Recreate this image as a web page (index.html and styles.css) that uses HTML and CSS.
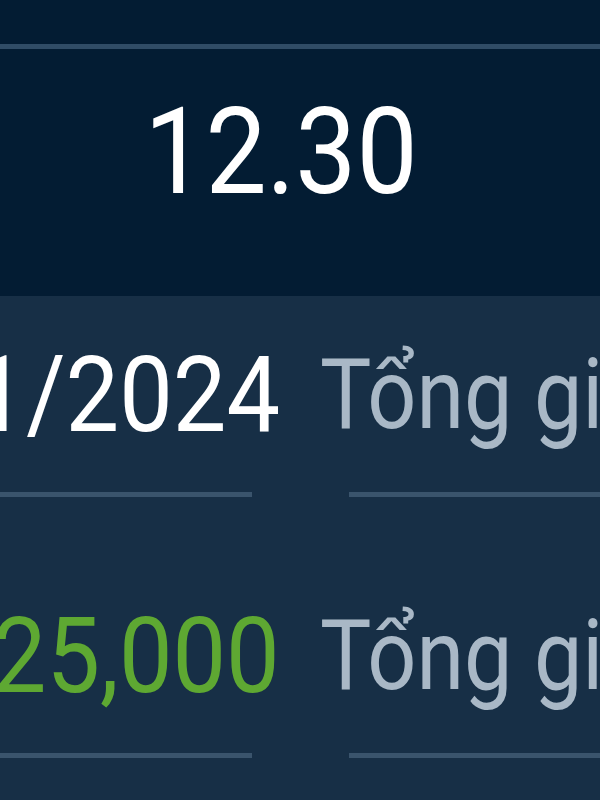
FILE: index.html
```html
<!DOCTYPE html>
<html lang="vi">
<head>
    <meta charset="UTF-8">
    <meta name="viewport" content="width=device-width, initial-scale=1.0">
    <title>Bảng công</title>
    <link rel="stylesheet" href="styles.css">
</head>
<body>
    <div class="screen">
        <!-- Phần đầu: giờ hiện tại -->
        <div class="header">
            <div class="rule"></div>
            <div class="clock"><span class="squeeze">12.30</span></div>
        </div>

        <!-- Bảng tổng hợp -->
        <div class="summary">
            <div class="row">
                <div class="cell value-cell">
                    <div class="value"><span class="squeeze">31/01/2024</span></div>
                    <div class="divider"></div>
                </div>
                <div class="cell label-cell">
                    <div class="label"><span class="squeeze">Tổng giờ làm</span></div>
                    <div class="divider"></div>
                </div>
            </div>
            <div class="row">
                <div class="cell value-cell">
                    <div class="value money"><span class="squeeze">25,000</span></div>
                    <div class="divider"></div>
                </div>
                <div class="cell label-cell">
                    <div class="label"><span class="squeeze">Tổng giá trị</span></div>
                    <div class="divider"></div>
                </div>
            </div>
        </div>
    </div>
</body>
</html>
```

FILE: styles.css
```css
/* Mise en page générale */
body {
    margin: 0;
    background-color: #172f46;
    font-family: Roboto, "Noto Sans", sans-serif;
    overflow: hidden;
}
.screen {
    width: 600px;
    height: 800px;
    overflow: hidden;
}

/* Bandeau du haut */
.header {
    background-color: #031c33;
    height: 296px;
    padding-top: 44px;
    box-sizing: border-box;
}
.rule {
    height: 5px;
    background-color: #304c66;
}
.clock {
    margin-top: 33px;
    padding-right: 38px;
    text-align: center;
    color: #ffffff;
    font-size: 121px;
    line-height: 140px;
    white-space: nowrap;
}

/* Texte légèrement condensé comme sur l'écran */
.squeeze {
    display: inline-block;
    transform: scaleX(0.9);
}

/* Tableau récapitulatif */
.summary {
    padding-top: 39px;
}
.row {
    display: grid;
    grid-template-columns: 280px 1fr;
    column-gap: 40px;
}
.row + .row {
    margin-top: 99px;
}
.cell {
    min-width: 0;
}
.value {
    display: flex;
    justify-content: flex-end;
    color: #ffffff;
    font-size: 106px;
    line-height: 120px;
    white-space: nowrap;
}
.value .squeeze {
    transform-origin: right center;
}
.money {
    color: #5ea832;
}
.label {
    color: #a9b8c6;
    font-size: 98px;
    line-height: 120px;
    white-space: nowrap;
}
.label .squeeze {
    transform: scaleX(0.88);
    transform-origin: left center;
}
.divider {
    height: 5px;
    margin-top: 37px;
    background-color: #3a546c;
}
.value-cell .divider {
    margin-right: 28px;
}
.label-cell .divider {
    margin-left: 29px;
    margin-right: -20px;
}
```
